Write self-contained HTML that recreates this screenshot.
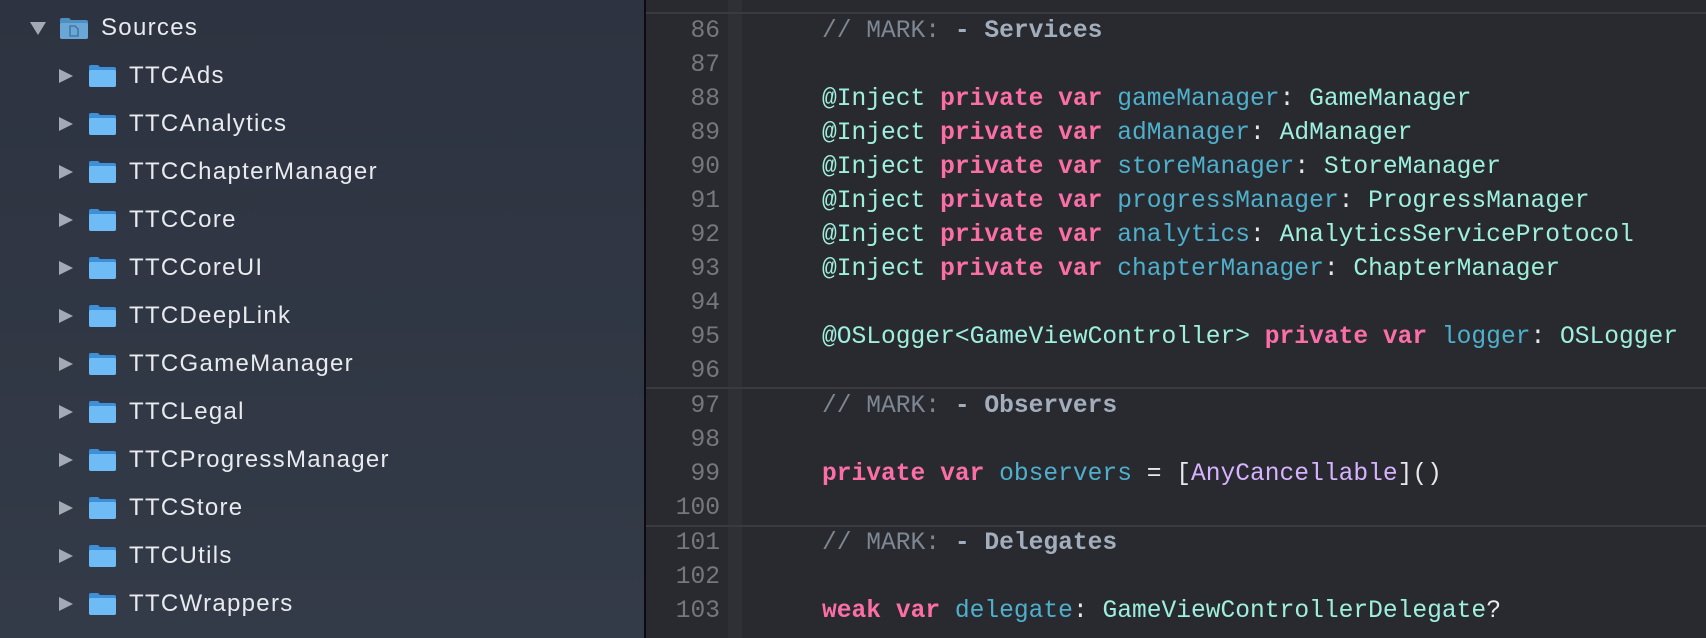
<!DOCTYPE html>
<html><head><meta charset="utf-8"><style>
html,body{margin:0;padding:0;width:1706px;height:638px;overflow:hidden;background:#292a30}
#side{position:absolute;left:0;top:0;width:644px;height:638px;background:linear-gradient(#2d3340,#343b48)}
#bar{position:absolute;left:644px;top:0;width:2px;height:638px;background:#0c0c0e}
#strip{position:absolute;left:728px;top:0;width:14px;height:638px;background:#2f3036}
.sep{position:absolute;left:646px;right:0;height:2px;background:#3a3b41}
.row{position:absolute;height:48px;font:24px "Liberation Sans",sans-serif;line-height:48px;color:#e8eaee;letter-spacing:1.3px;white-space:nowrap}
.tri{position:absolute;width:0;height:0}
.tri.r{border-top:7px solid transparent;border-bottom:7px solid transparent;border-left:14px solid #a4aab5}
.tri.d{border-left:8px solid transparent;border-right:8px solid transparent;border-top:13px solid #a4aab5}
.fold{position:absolute;width:28px;height:21px}
.ln{position:absolute;left:646px;width:74px;text-align:right;font:24.6px "Liberation Mono",monospace;line-height:34px;color:#76777c;height:34px}
.code{position:absolute;left:822px;font:24.6px "Liberation Mono",monospace;line-height:34px;color:#e8e8ea;height:34px;white-space:pre}
.k{color:#fc6fa6;font-weight:bold}
.t{color:#9ef0dd}
.p{color:#4eb0cc}
.c{color:#7d8792}
.m{color:#a3aebc;font-weight:bold}
.u{color:#d6b2ff}
</style></head><body>
<div id="side"></div><div id="bar"></div><div id="strip"></div>
<div class="sep" style="top:12px"></div>
<div class="sep" style="top:387px"></div>
<div class="sep" style="top:525px"></div>

<div class="tri d" style="left:30px;top:22px"></div>
<svg class="fold" style="left:59px;top:17px;width:30px;height:23px" viewBox="0 0 30 23"><path d="M1 3 Q1 1 3 1 H10 L12 3 H27 Q29 3 29 5 V20 Q29 22 27 22 H3 Q1 22 1 20Z" fill="#4e8fc2"/><rect x="1" y="6" width="28" height="16" rx="2" fill="#6aa6d6"/><path d="M11 9 H16 L19 12 V19 H11Z" fill="none" stroke="#3d6f98" stroke-width="1.3"/></svg>
<div class="row" style="left:101px;top:4px">Sources</div>

<div id="rows"></div>
<script>
var names=["TTCAds","TTCAnalytics","TTCChapterManager","TTCCore","TTCCoreUI","TTCDeepLink","TTCGameManager","TTCLegal","TTCProgressManager","TTCStore","TTCUtils","TTCWrappers"];
var h="";
names.forEach(function(n,i){var c=28+48*(i+1);
h+='<div class="tri r" style="left:59px;top:'+(c-7)+'px"></div>';
h+='<svg class="fold" style="left:88px;top:'+(c-12)+'px;width:29px;height:24px" viewBox="0 0 29 24"><path d="M1 3 Q1 1 3 1 H10 L12 3 H26 Q28 3 28 5 V21 Q28 23 26 23 H3 Q1 23 1 21Z" fill="#3f8fd6"/><rect x="1" y="6" width="27" height="17" rx="2" fill="#6fbbf5"/></svg>';
h+='<div class="row" style="left:129px;top:'+(c-24)+'px">'+n+'</div>';});
document.getElementById("rows").outerHTML=h;
</script>

<div id="code"></div>
<script>
var L={85:'',86:'<span class="c">// MARK: </span><span class="m">- Services</span>',87:'',
88:'<span class="t">@Inject</span> <span class="k">private</span> <span class="k">var</span> <span class="p">gameManager</span>: <span class="t">GameManager</span>',
89:'<span class="t">@Inject</span> <span class="k">private</span> <span class="k">var</span> <span class="p">adManager</span>: <span class="t">AdManager</span>',
90:'<span class="t">@Inject</span> <span class="k">private</span> <span class="k">var</span> <span class="p">storeManager</span>: <span class="t">StoreManager</span>',
91:'<span class="t">@Inject</span> <span class="k">private</span> <span class="k">var</span> <span class="p">progressManager</span>: <span class="t">ProgressManager</span>',
92:'<span class="t">@Inject</span> <span class="k">private</span> <span class="k">var</span> <span class="p">analytics</span>: <span class="t">AnalyticsServiceProtocol</span>',
93:'<span class="t">@Inject</span> <span class="k">private</span> <span class="k">var</span> <span class="p">chapterManager</span>: <span class="t">ChapterManager</span>',
94:'',
95:'<span class="t">@OSLogger&lt;GameViewController&gt;</span> <span class="k">private</span> <span class="k">var</span> <span class="p">logger</span>: <span class="t">OSLogger</span>',
96:'',97:'<span class="c">// MARK: </span><span class="m">- Observers</span>',98:'',
99:'<span class="k">private</span> <span class="k">var</span> <span class="p">observers</span> = [<span class="u">AnyCancellable</span>]()',
100:'',101:'<span class="c">// MARK: </span><span class="m">- Delegates</span>',102:'',
103:'<span class="k">weak</span> <span class="k">var</span> <span class="p">delegate</span>: <span class="t">GameViewControllerDelegate</span>?'};
var h="";
for(var n=85;n<=103;n++){var c=32+34*(n-86)+(n>=97?1:0)+(n>=101?1:0)+(n==85?-1:0);
h+='<div class="ln" style="top:'+(c-17)+'px">'+n+'</div>';
h+='<div class="code" style="top:'+(c-17)+'px">'+L[n]+'</div>';}
document.getElementById("code").outerHTML=h;
</script>
<div style="position:absolute;left:646px;right:0;top:0;height:12px;background:#292a30"></div>
<div style="position:absolute;left:728px;width:14px;top:0;height:12px;background:#2f3036"></div>
<div class="sep" style="top:12px"></div>
</body></html>
